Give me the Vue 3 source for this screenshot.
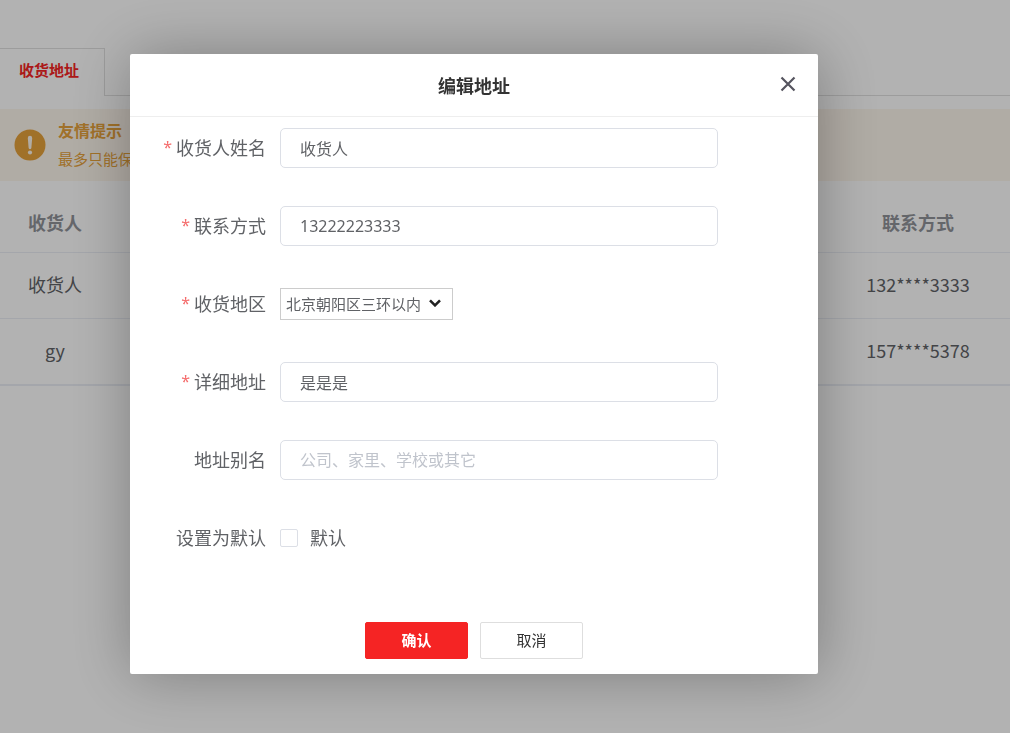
<script setup>
import { ref } from 'vue'

const receiver = ref('收货人')
const phone = ref('13222223333')
const region = ref('北京朝阳区三环以内')
const detail = ref('是是是')
const alias = ref('')
const isDefault = ref(false)

const rows = [
  { name: '收货人', phone: '132****3333' },
  { name: 'gy', phone: '157****5378' },
]
</script>

<template>
  <div class="page">
    <main class="account">
      <nav class="tabs">
        <a class="tab" href="#address">收货地址</a>
        <span class="tabs-line"></span>
      </nav>

      <section class="notice">
        <svg class="notice-icon" viewBox="0 0 32 32" aria-hidden="true">
          <circle cx="16" cy="16" r="15.5" fill="#e6a23c" />
          <path d="M13.800 9a2.200 2.200 0 0 1 4.400 0l-.8 9.800a1.400 1.400 0 0 1-2.800 0z" fill="#fdf6ec" />
          <circle cx="16" cy="23.500" r="2.100" fill="#fdf6ec" />
        </svg>
        <div>
          <p class="notice-title">友情提示</p>
          <p class="notice-text">最多只能保</p>
        </div>
      </section>

      <table class="addresses">
        <colgroup>
          <col class="col-name" />
          <col />
          <col class="col-phone" />
        </colgroup>
        <thead>
          <tr>
            <th>收货人</th>
            <th></th>
            <th>联系方式</th>
          </tr>
        </thead>
        <tbody>
          <tr v-for="row in rows" :key="row.phone">
            <td>{{ row.name }}</td>
            <td></td>
            <td>{{ row.phone }}</td>
          </tr>
        </tbody>
      </table>
    </main>

    <div class="overlay">
      <form class="dialog" role="dialog" aria-labelledby="dialog-title" @submit.prevent>
        <header class="dialog-header">
          <h2 id="dialog-title">编辑地址</h2>
          <button class="close" type="button" aria-label="关闭">
            <svg viewBox="0 0 16 16" aria-hidden="true">
              <path d="M1.500 1.500l13 13M14.500 1.500l-13 13" fill="none" stroke="#55545f" stroke-width="2.200" />
            </svg>
          </button>
        </header>

        <div class="fields">
          <div class="field">
            <label class="required" for="receiver">收货人姓名</label>
            <input id="receiver" v-model="receiver" class="text-box" type="text" />
          </div>
          <div class="field">
            <label class="required" for="phone">联系方式</label>
            <input id="phone" v-model="phone" class="text-box" type="text" />
          </div>
          <div class="field">
            <label class="required" for="region">收货地区</label>
            <span class="select-wrap">
              <select id="region" v-model="region">
                <option>北京朝阳区三环以内</option>
              </select>
              <svg viewBox="0 0 12 8" aria-hidden="true">
                <path d="M1 1.300l5 5 5-5" fill="none" stroke="#222" stroke-width="2.600" />
              </svg>
            </span>
          </div>
          <div class="field">
            <label class="required" for="detail">详细地址</label>
            <input id="detail" v-model="detail" class="text-box" type="text" />
          </div>
          <div class="field">
            <label for="alias">地址别名</label>
            <input id="alias" v-model="alias" class="text-box" type="text" placeholder="公司、家里、学校或其它" />
          </div>
          <div class="field">
            <label for="default">设置为默认</label>
            <span class="check">
              <input id="default" v-model="isDefault" type="checkbox" />
              <label for="default">默认</label>
            </span>
          </div>
        </div>

        <footer class="actions">
          <button class="confirm" type="submit">确认</button>
          <button class="cancel" type="button">取消</button>
        </footer>
      </form>
    </div>
  </div>
</template>

<style>
body {
  background: #fff;
}
</style>

<style scoped>
.page,
.page button,
.page input,
.page select {
  box-sizing: border-box;
  font-family: "Noto Sans CJK SC", sans-serif;
}

.account {
  padding-top: 48px;
}

.tabs {
  display: flex;
  align-items: stretch;
  height: 48px;
}

.tab {
  box-sizing: border-box;
  width: 105px;
  padding-left: 19px;
  border: 1px solid #e0e0e0;
  border-width: 1px 1px 0 0;
  color: #f52424;
  font-size: 15px;
  font-weight: 700;
  line-height: 42px;
  text-decoration: none;
}

.tabs-line {
  flex: 1;
  border-bottom: 1px solid #e0e0e0;
}

.notice {
  display: flex;
  align-items: center;
  gap: 12px;
  height: 72px;
  margin-top: 13px;
  padding-left: 14px;
  background: #fdf6ec;
  color: #e6a23c;
}

.notice-icon {
  width: 32px;
  height: 32px;
}

.notice p {
  margin: 0;
}

.notice-title {
  font-size: 16px;
  font-weight: 700;
  line-height: 28px;
}

.notice-text {
  font-size: 15px;
  line-height: 30px;
}

.addresses {
  width: 100%;
  border-spacing: 0;
  border-bottom: 1px solid #ebeef5;
  table-layout: fixed;
  color: #606266;
  font-size: 18px;
}

.col-name {
  width: 110px;
}

.col-phone {
  width: 184px;
}

.addresses th,
.addresses td {
  box-sizing: border-box;
  height: 66px;
  padding: 0 0 4px;
  border-bottom: 1px solid #ebeef5;
  text-align: center;
}

.addresses th {
  height: 72px;
  padding: 10px 0 0;
  color: #909399;
}

.overlay {
  position: fixed;
  inset: 0;
  display: flex;
  align-items: flex-start;
  padding: 54px 192px 0 130px;
  background: rgba(0, 0, 0, 0.3);
}

.dialog {
  flex: 1;
  border-radius: 2px;
  background: #fff;
  box-shadow: 1px 1px 62px rgba(0, 0, 0, 0.3);
}

.dialog-header {
  position: relative;
  border-bottom: 1px solid #eee;
}

.dialog-header h2 {
  margin: 0;
  color: #333;
  font-size: 18px;
  font-weight: 700;
  line-height: 62px;
  text-align: center;
}

.close {
  position: absolute;
  top: 18px;
  right: 18px;
  display: grid;
  place-items: center;
  width: 24px;
  height: 24px;
  padding: 0;
  border: 0;
  background: none;
}

.close svg {
  width: 16px;
  height: 16px;
}

.fields {
  display: flex;
  flex-direction: column;
  gap: 38px;
  padding: 11px 100px 0 0;
}

.field {
  display: grid;
  grid-template-columns: 136px 1fr;
  grid-template-rows: 40px;
  align-items: center;
  column-gap: 14px;
}

.field label {
  padding-bottom: 2px;
  color: #606266;
  font-size: 18px;
  line-height: 38px;
  text-align: right;
  white-space: nowrap;
}

.required::before {
  content: "*";
  margin-right: 4px;
  color: #f56c6c;
  font-family: "Noto Sans", sans-serif;
  font-size: 16px;
  line-height: 1;
  vertical-align: 2px;
}

.text-box {
  width: 100%;
  height: 40px;
  padding: 0 19px;
  border: 1px solid #dcdfe6;
  border-radius: 5px;
  background: #fff;
  color: #606266;
  font-size: 16px;
  outline: none;
}

.page .text-box {
  font-family: "Noto Sans", "Noto Sans CJK SC", sans-serif;
}

.text-box::placeholder {
  color: #c0c4cc;
  opacity: 1;
}

.select-wrap {
  position: relative;
  width: 173px;
  height: 32px;
}

.select-wrap select {
  width: 100%;
  height: 32px;
  padding: 0 5px 2px;
  border: 1px solid #ccc;
  border-radius: 0;
  appearance: none;
  background: #fff;
  color: #606266;
  font-size: 15px;
}

.select-wrap svg {
  position: absolute;
  top: 11px;
  right: 12px;
  width: 12px;
  height: 8px;
  pointer-events: none;
}

.check {
  display: flex;
  align-items: center;
  gap: 12px;
}

.check input {
  width: 18px;
  height: 18px;
  margin: 0;
  border: 1px solid #dcdfe6;
  border-radius: 2px;
  appearance: none;
  background: #fff;
}

.check input:checked {
  background: #f52424;
}

.actions {
  display: flex;
  justify-content: center;
  gap: 12px;
  padding: 64px 0 15px;
}

.actions button {
  width: 103px;
  height: 37px;
  padding: 0 0 2px;
  border: 1px solid #dedede;
  border-radius: 2px;
  background: #fff;
  color: #333;
  font-size: 15px;
}

.actions .confirm {
  border-color: #f52424;
  background: #f52424;
  color: #fff;
  font-weight: 700;
}
</style>
